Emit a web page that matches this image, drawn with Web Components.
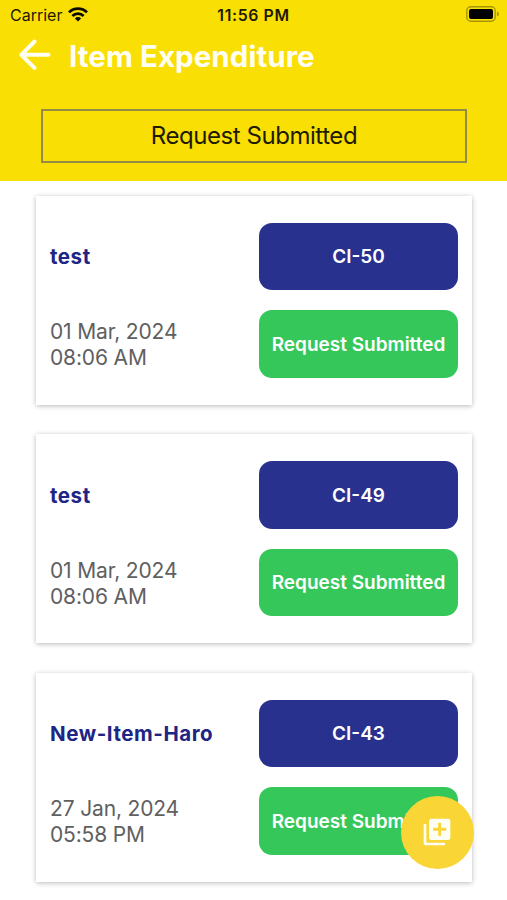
<!DOCTYPE html>
<html lang="en">
<head>
<meta charset="utf-8">
<title>Item Expenditure</title>
<style>
html, body { margin: 0; height: 100%; overflow: hidden; background: #fff; }
body { font-family: Inter, "Liberation Sans", sans-serif; }
</style>
</head>
<body>
<expenditure-screen></expenditure-screen>
<script>
function define(name, html) {
  const template = document.createElement('template');
  template.innerHTML = html;
  customElements.define(name, class extends HTMLElement {
    constructor() {
      super();
      this.attachShadow({ mode: 'open' }).append(template.content.cloneNode(true));
    }
  });
}

define('status-bar', `
<style>
:host { display: grid; grid-template-columns: 1fr auto 1fr; align-items: center; height: 30px; padding: 0 8px 0 10px; color: #1c1a00; font-size: 16px; line-height: 20px; box-sizing: border-box; }
.left { display: flex; align-items: center; gap: 6px; }
.left svg { margin-top: -2px; }
.time { font-weight: 600; font-size: 15.8px; letter-spacing: 0.65px; padding-top: 1px; margin-left: -2px; }
.right { display: flex; justify-content: flex-end; }
svg { display: block; }
.right svg { margin-top: -2px; }
</style>
<div class="left"><span class="carrier">Carrier</span>
<svg width="20" height="15" viewBox="0 0 20 15"><g fill="none" stroke="#0c0b00" stroke-width="2.7"><path d="M1 5.4a12.7 12.7 0 0 1 18 0"/><path d="M4.4 9a7.9 7.9 0 0 1 11.2 0"/></g><path fill="#0c0b00" d="M6.9 11.4a4.4 4.4 0 0 1 6.2 0L10 14.6z"/></svg></div>
<span class="time">11:56 PM</span>
<div class="right"><svg width="33" height="16" viewBox="0 0 33 16"><rect x=".8" y=".8" width="28.4" height="14.4" rx="4" fill="none" stroke="#a69500" stroke-width="1.4"/><rect x="3" y="3" width="24" height="10" rx="2" fill="#000"/><path d="M31 5.5q2 .6 2 2.5t-2 2.5z" fill="#a69500"/></svg></div>
`);

define('nav-bar', `
<style>
:host { display: flex; align-items: center; height: 50px; padding-left: 19px; color: #fffef2; font-size: 29.5px; font-weight: 700; line-height: 36px; letter-spacing: 0.05px; }
svg { display: block; margin: -1px 18px 0 0; }
.title { padding-top: 1px; }
</style>
<svg width="32" height="32" viewBox="0 0 32 32" fill="none" stroke="currentColor" stroke-width="4" stroke-linecap="round" stroke-linejoin="round"><path d="M15.5 2.5 2.3 15.8l13.2 13M3 15.8h26.5"/></svg>
<span class="title"><slot></slot></span>
`);

define('filter-box', `
<style>
:host { display: flex; align-items: center; justify-content: center; height: 54px; margin: 29px 40px 0 41px; box-sizing: border-box; border: 2px solid #938b43; color: #1d1b00; font-size: 24px; line-height: 30px; letter-spacing: -0.45px; }
</style>
<slot></slot>
`);

define('status-pill', `
<style>
:host { display: flex; align-items: center; justify-content: center; height: 67.3px; box-sizing: border-box; padding-top: 1.4px; border-radius: 13px; background: var(--pill, #29318e); color: #fff; font-size: 19px; font-weight: 600; line-height: 24px; white-space: nowrap; }
</style>
<slot></slot>
`);

define('item-card', `
<style>
:host { display: grid; grid-template-columns: 1fr 199px; grid-template-rows: 67.3px 67.3px; row-gap: 20.2px; align-items: center; height: 209px; box-sizing: border-box; padding: 27.3px 14px 0; background: #fff; box-shadow: 0 1px 5px rgba(0,0,0,.28); }
.name { color: #202585; font-size: 20.5px; font-weight: 700; line-height: 26px; letter-spacing: 0.55px; padding-top: 1.6px; }
.date { color: #606060; font-size: 21px; line-height: 25.7px; letter-spacing: -0.15px; padding-top: 2px; }
::slotted([slot=time]) { display: block; }
</style>
<div class="name"><slot name="name"></slot></div>
<status-pill><slot name="code"></slot></status-pill>
<div class="date"><slot name="date"></slot><slot name="time"></slot></div>
<status-pill style="--pill:#35c759"><slot name="status"></slot></status-pill>
`);

define('add-button', `
<style>
:host { position: absolute; left: 401px; top: 795.5px; width: 73px; height: 73px; border-radius: 50%; background: #f9d535; display: flex; align-items: center; justify-content: center; }
svg { display: block; margin: -1px 1px 0 0; }
</style>
<svg width="32" height="32" viewBox="0 0 24 24"><path fill="none" stroke="#fffef4" stroke-width="2" stroke-linejoin="round" d="M3 6v14q0 1 1 1h14"/><rect x="6" y="2" width="16" height="16" rx="2" fill="#fffef4"/><path d="M14 5.100v9.800M9.100 10h9.800" stroke="#f9d535" stroke-width="2.200"/></svg>
`);

define('expenditure-screen', `
<style>
:host { display: block; position: relative; width: 507px; height: 900px; overflow: hidden; background: #fff; }
header { height: 180.5px; background: #fadf05; }
main { display: flex; flex-direction: column; gap: 29.5px; padding: 15.2px 35px 0 36px; }
</style>
<header>
<status-bar></status-bar>
<nav-bar>Item Expenditure</nav-bar>
<filter-box>Request Submitted</filter-box>
</header>
<main>
<item-card><span slot="name">test</span><span slot="code">CI-50</span><span slot="date">01 Mar, 2024</span><span slot="time">08:06 AM</span><span slot="status">Request Submitted</span></item-card>
<item-card><span slot="name">test</span><span slot="code">CI-49</span><span slot="date">01 Mar, 2024</span><span slot="time">08:06 AM</span><span slot="status">Request Submitted</span></item-card>
<item-card><span slot="name">New-Item-Haro</span><span slot="code">CI-43</span><span slot="date">27 Jan, 2024</span><span slot="time">05:58 PM</span><span slot="status">Request Submitted</span></item-card>
</main>
<add-button></add-button>
`);
</script>
</body>
</html>
